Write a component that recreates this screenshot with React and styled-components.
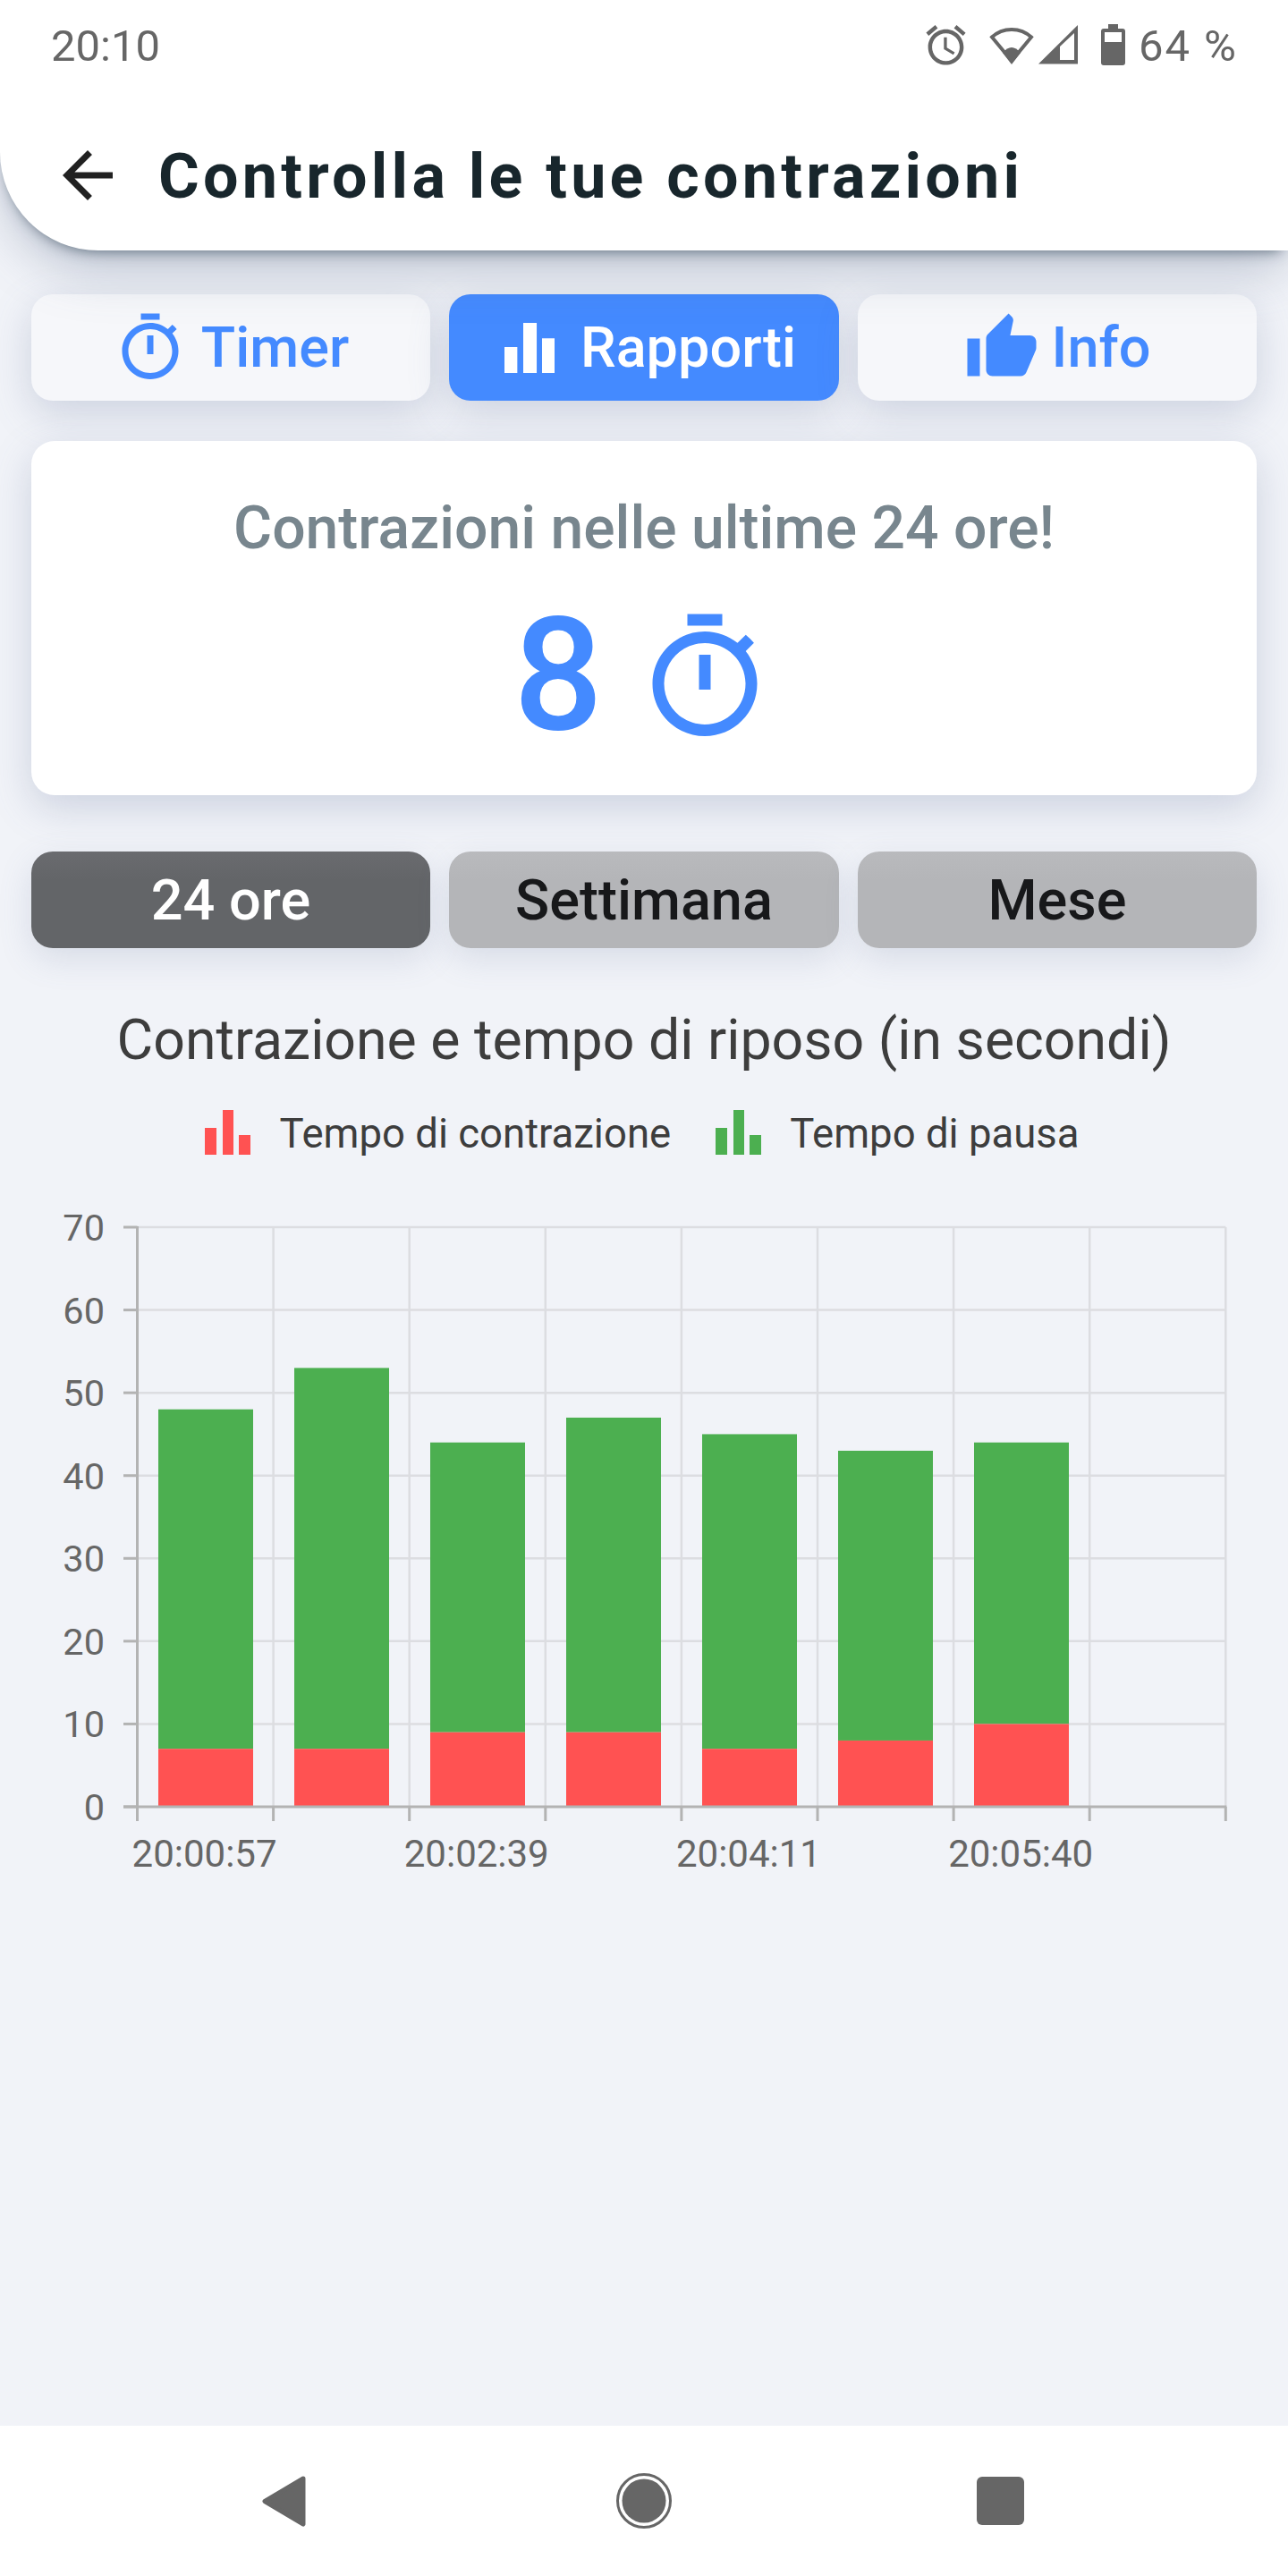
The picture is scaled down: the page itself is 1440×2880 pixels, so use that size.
import React from 'react'
import styled, { createGlobalStyle } from 'styled-components'

const BLUE = '#448aff'
const RED = '#ff5252'
const GREEN = '#4caf50'

const GlobalStyle = createGlobalStyle`
  html, body { margin: 0; padding: 0; background: #f1f3f8; }
  * { box-sizing: border-box; }
  body { font-family: Roboto, "Liberation Sans", sans-serif; }
`

const Page = styled.div`
  width: 1440px;
  height: 2880px;
  display: flex;
  flex-direction: column;
  background: #f1f3f8;
  overflow: hidden;
`

const Header = styled.header`
  height: 280px;
  flex: none;
  background: #fff;
  border-bottom-left-radius: 110px;
  box-shadow: 0 8px 16px -8px rgba(50, 70, 85, 0.75), 0 24px 56px -4px rgba(90, 105, 135, 0.36);
  position: relative;
  z-index: 2;
`

const StatusBar = styled.div`
  height: 98px;
  padding: 2px 56px 0 57px;
  display: flex;
  align-items: center;
  justify-content: space-between;
  color: #666;
`

const Time = styled.span`
  font-size: 49px;
  line-height: 56px;
  padding-top: 3px;
`

const StatusIcons = styled.div`
  display: flex;
  align-items: center;
`

const Percent = styled.span`
  font-size: 49px;
  line-height: 56px;
  letter-spacing: 2px;
  margin-left: 15px;
  padding-top: 3px;
`

const TitleRow = styled.div`
  height: 182px;
  padding: 13px 0 0 56px;
  display: flex;
  align-items: center;
`

const Title = styled.h1`
  margin: 2px 0 0 37px;
  font-size: 70px;
  line-height: 80px;
  font-weight: 700;
  letter-spacing: 4.25px;
  color: #18262c;
`

const Row = styled.div`
  display: grid;
  grid-template-columns: 446px 436px 446px;
  gap: 21px;
  padding: 0 35px;
  margin-top: ${p => p.$top}px;
`

const Tab = styled.div`
  height: 119px;
  border-radius: 24px;
  display: flex;
  align-items: center;
  justify-content: center;
  gap: ${p => p.$gap || 15}px;
  font-size: 63px;
  font-weight: 500;
  color: ${p => (p.$active ? '#fff' : BLUE)};
  background: ${p => (p.$active ? BLUE : '#f6f7fa')};
  box-shadow: 0 14px 44px rgba(100, 115, 155, 0.26);
`

const Card = styled.section`
  height: 396px;
  margin: 45px 35px 0;
  padding-top: 60px;
  border-radius: 26px;
  background: #fff;
  display: flex;
  flex-direction: column;
  align-items: center;
  box-shadow: 0 14px 44px rgba(100, 115, 155, 0.26);
`

const CardTitle = styled.div`
  font-size: 66px;
  line-height: 76px;
  font-weight: 500;
  color: #78868e;
`

const Count = styled.div`
  margin-top: 38px;
  display: flex;
  align-items: center;
  gap: 36px;
  font-size: 176px;
  line-height: 176px;
  font-weight: 500;
  color: ${BLUE};

  svg {
    margin-top: 6px;
  }
`

const Range = styled.div`
  height: 108px;
  border-radius: 24px;
  display: flex;
  align-items: center;
  justify-content: center;
  font-size: 63px;
  font-weight: 500;
  color: ${p => (p.$active ? '#fff' : '#17181a')};
  background: ${p =>
    p.$active
      ? 'linear-gradient(#6a6b6f, #636568 30%)'
      : 'linear-gradient(#b9babd, #b4b5b8 30%)'};
  box-shadow: 0 12px 36px rgba(100, 115, 155, 0.18);
`

const ChartTitle = styled.h2`
  margin: 67px 0 0;
  text-align: center;
  font-size: 62.6px;
  line-height: 72px;
  font-weight: 400;
  color: #3d3d3d;
`

const Legend = styled.div`
  margin-top: 40px;
  height: 54px;
  padding-right: 4px;
  display: flex;
  align-items: center;
  justify-content: center;
  gap: 50px;
`

const LegendItem = styled.div`
  display: flex;
  align-items: center;
  gap: 32px;
  font-size: 45.5px;
  line-height: 54px;
  color: #3d3d3d;
`

const LegendLabel = styled.span`
  padding-top: 3px;
`

const ChartSvg = styled.svg`
  display: block;
  margin-top: 47px;
  flex: none;
`

const NavBar = styled.nav`
  margin-top: auto;
  height: 168px;
  flex: none;
  background: #fff;
  padding-left: 293px;
  display: flex;
  align-items: center;
`

const BackKey = styled.svg`
  margin-right: 347px;
`

const RecentKey = styled.div`
  width: 53px;
  height: 54px;
  margin-left: 341px;
  border-radius: 6px;
  background: #666;
`

const TIMER = 'M15 1H9v2h6V1zm-4 13h2V8h-2v6zm8.03-6.61l1.42-1.42c-.43-.51-.9-.99-1.41-1.41l-1.42 1.42C16.07 4.74 14.12 4 12 4c-4.97 0-9 4.03-9 9s4.02 9 9 9 9-4.03 9-9c0-2.12-.74-4.07-1.97-5.61zM12 20c-3.87 0-7-3.13-7-7s3.13-7 7-7 7 3.13 7 7-3.13 7-7 7z'
const THUMB = 'M1 21h4V9H1v12zm22-11c0-1.1-.9-2-2-2h-6.31l.95-4.57.03-.32c0-.41-.17-.79-.44-1.06L14.17 1 7.59 7.59C7.22 7.95 7 8.45 7 9v10c0 1.1.9 2 2 2h9c.83 0 1.54-.5 1.84-1.22l3.02-7.05c.09-.23.14-.47.14-.73v-2z'
const BARS = 'M4 11.7h4.1V20H4zM10 4h4.3v16H10zM16 8.9h4V20h-4z'
const ARROW = 'M20 11H7.83l5.59-5.59L12 4l-8 8 8 8 1.41-1.41L7.83 13H20v-2z'
const ALARM = 'M22 5.72l-4.6-3.86-1.29 1.53 4.6 3.86L22 5.72zM7.88 3.39L6.6 1.86 2 5.71l1.29 1.53 4.59-3.85zM12.5 8H11v6l4.75 2.85.75-1.23-4-2.37V8zM12 4c-4.97 0-9 4.03-9 9s4.03 9 9 9c4.97 0 9-4.03 9-9s-4.03-9-9-9zm0 16c-3.87 0-7-3.13-7-7s3.13-7 7-7 7 3.13 7 7-3.13 7-7 7z'

function Icon({ d, size = 84, color = 'currentColor' }) {
  return (
    <svg width={size} height={size} viewBox="0 0 24 24" fill={color}>
      <path d={d} />
    </svg>
  )
}

function LegendBars({ color }) {
  return (
    <svg width="51" height="50" viewBox="0 0 51 50" fill={color}>
      <rect x="0" y="20" width="13" height="30" />
      <rect x="20" y="0" width="12" height="50" />
      <rect x="38" y="28" width="13" height="22" />
    </svg>
  )
}

function StatusGlyphs() {
  return (
    <StatusIcons>
      <svg width="53" height="53" viewBox="0 0 24 24" fill="#666">
        <path d={ALARM} />
      </svg>
      <svg width="52" height="44" viewBox="0 0 52 44" fill="#666" style={{ marginLeft: 21 }}>
        <path d="M26 40 L4 13.5 C16 2 36 2 48 13.5 Z" fill="none" stroke="#666" strokeWidth="4" strokeLinejoin="miter" />
        <path d="M16 31 Q26 19 36 31 L26 44 Z" />
      </svg>
      <svg width="44" height="44" viewBox="0 0 44 44" fill="#666" fillRule="evenodd" style={{ marginLeft: 4 }}>
        <path d="M0 43.5 L44 0 V43.5 Z M24 24 V39 H40 V9 Z" />
      </svg>
      <svg width="27" height="46" viewBox="0 0 27 46" fill="#666" fillRule="evenodd" style={{ marginLeft: 26 }}>
        <path d="M8 0 H19 V5 H24 Q27 5 27 8 V43 Q27 46 24 46 H3 Q0 46 0 43 V8 Q0 5 3 5 H8 Z M4 9 V20 H23 V9 Z" />
      </svg>
      <Percent>64 %</Percent>
    </StatusIcons>
  )
}

const DATA = [
  [7, 48],
  [7, 53],
  [9, 44],
  [9, 47],
  [7, 45],
  [8, 43],
  [10, 44],
]
const LABELS = { 0: '20:00:57', 2: '20:02:39', 4: '20:04:11', 6: '20:05:40' }
const AXIS_X = 153.5
const BASE_Y = 2020
const STEP_X = 152.1
const STEP_Y = 92.57

function Chart() {
  const right = AXIS_X + STEP_X * 8
  const ys = [0, 1, 2, 3, 4, 5, 6, 7]
  const xs = [0, 1, 2, 3, 4, 5, 6, 7, 8]
  return (
    <ChartSvg width="1440" height="780" viewBox="0 1340 1440 780" fontFamily="Roboto, sans-serif">
      {xs.slice(1).map(i => (
        <line key={i} x1={AXIS_X + i * STEP_X} x2={AXIS_X + i * STEP_X} y1="1372" y2={BASE_Y} stroke="#dcdde1" strokeWidth="2.5" />
      ))}
      {ys.slice(1).map(i => (
        <line key={i} x1={AXIS_X} x2={right} y1={BASE_Y - i * STEP_Y} y2={BASE_Y - i * STEP_Y} stroke="#dcdde1" strokeWidth="2.5" />
      ))}
      {DATA.map(([rest, total], i) => {
        const x = 177 + i * 152
        return (
          <g key={i}>
            <rect x={x} y={BASE_Y - total * STEP_Y / 10} width="106" height={(total - rest) * STEP_Y / 10} fill={GREEN} />
            <rect x={x} y={BASE_Y - rest * STEP_Y / 10} width="106" height={rest * STEP_Y / 10} fill={RED} />
          </g>
        )
      })}
      <line x1={AXIS_X} x2={AXIS_X} y1="1371" y2="2036" stroke="#b3b3b3" strokeWidth="3" />
      <line x1="138" x2={right + 1} y1={BASE_Y} y2={BASE_Y} stroke="#b3b3b3" strokeWidth="3" />
      {ys.map(i => (
        <g key={i}>
          <line x1="138" x2={AXIS_X} y1={BASE_Y - i * STEP_Y} y2={BASE_Y - i * STEP_Y} stroke="#b3b3b3" strokeWidth="3" />
          <text x="117" y={BASE_Y - i * STEP_Y + 15} textAnchor="end" fontSize="41.5" fill="#666">{i * 10}</text>
        </g>
      ))}
      {xs.slice(1).map(i => (
        <line key={i} x1={AXIS_X + i * STEP_X} x2={AXIS_X + i * STEP_X} y1={BASE_Y} y2="2036" stroke="#b3b3b3" strokeWidth="3" />
      ))}
      {Object.entries(LABELS).map(([i, label]) => (
        <text key={i} x={AXIS_X + (Number(i) + 0.5) * STEP_X - 1} y="2087" textAnchor="middle" fontSize="42" fill="#666">{label}</text>
      ))}
    </ChartSvg>
  )
}

export default function App() {
  return (
    <Page>
      <GlobalStyle />
      <Header>
        <StatusBar>
          <Time>20:10</Time>
          <StatusGlyphs />
        </StatusBar>
        <TitleRow>
          <Icon d={ARROW} color="#212121" />
          <Title>Controlla le tue contrazioni</Title>
        </TitleRow>
      </Header>

      <Row $top={49}>
        <Tab><Icon d={TIMER} />Timer</Tab>
        <Tab $active $gap={15}><Icon d={BARS} />Rapporti</Tab>
        <Tab $gap={14}><Icon d={THUMB} />Info</Tab>
      </Row>

      <Card>
        <CardTitle>Contrazioni nelle ultime 24 ore!</CardTitle>
        <Count>8<Icon d={TIMER} size={156} /></Count>
      </Card>

      <Row $top={63}>
        <Range $active>24 ore</Range>
        <Range>Settimana</Range>
        <Range>Mese</Range>
      </Row>

      <ChartTitle>Contrazione e tempo di riposo (in secondi)</ChartTitle>
      <Legend>
        <LegendItem><LegendBars color={RED} /><LegendLabel>Tempo di contrazione</LegendLabel></LegendItem>
        <LegendItem><LegendBars color={GREEN} /><LegendLabel>Tempo di pausa</LegendLabel></LegendItem>
      </Legend>
      <Chart />

      <NavBar>
        <BackKey width="49" height="57" viewBox="0 0 49 57" fill="#666" stroke="#666" strokeWidth="5" strokeLinejoin="round">
          <polygon points="46,3 3,28.5 46,54" />
        </BackKey>
        <svg width="62" height="64" viewBox="0 0 62 64" fill="#666">
          <circle cx="31" cy="32" r="24.5" />
          <circle cx="31" cy="32" r="29.5" fill="none" stroke="#666" strokeWidth="3" />
        </svg>
        <RecentKey />
      </NavBar>
    </Page>
  )
}
